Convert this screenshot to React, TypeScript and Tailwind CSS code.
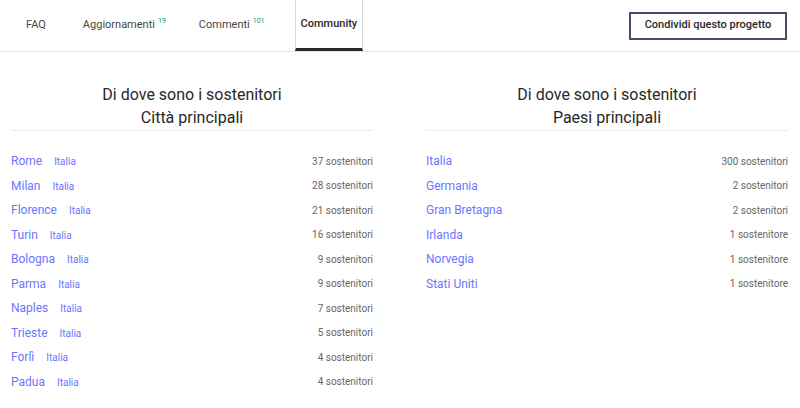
import React from "react";

const cities: [string, string][] = [
  ["Rome", "37 sostenitori"],
  ["Milan", "28 sostenitori"],
  ["Florence", "21 sostenitori"],
  ["Turin", "16 sostenitori"],
  ["Bologna", "9 sostenitori"],
  ["Parma", "9 sostenitori"],
  ["Naples", "7 sostenitori"],
  ["Trieste", "5 sostenitori"],
  ["Forlì", "4 sostenitori"],
  ["Padua", "4 sostenitori"],
];

const countries: [string, string][] = [
  ["Italia", "300 sostenitori"],
  ["Germania", "2 sostenitori"],
  ["Gran Bretagna", "2 sostenitori"],
  ["Irlanda", "1 sostenitore"],
  ["Norvegia", "1 sostenitore"],
  ["Stati Uniti", "1 sostenitore"],
];

function Heading({ sub }: { sub: string }) {
  return (
    <div className="border-b border-[#ececec] pb-[1px] text-center text-[16px] leading-[23px] text-[#282828]">
      <div>Di dove sono i sostenitori</div>
      <div>{sub}</div>
    </div>
  );
}

export default function App() {
  return (
    <div
      className="w-[800px] h-[408px] bg-white overflow-hidden"
      style={{ fontFamily: "Roboto, 'Noto Sans', sans-serif" }}
    >
      <div className="flex items-center justify-between h-[52px] border-b border-[#e6e6e6] pr-[13px]">
        <div className="flex h-full items-stretch text-[11px] text-[#464646]">
          <div className="flex items-center pl-[26px]">FAQ</div>
          <div className="flex items-center ml-[37px]">
            Aggiornamenti
            <sup className="ml-[3px] text-[7px] text-[#05a081] -mt-[2px]">19</sup>
          </div>
          <div className="flex items-center ml-[33px]">
            Commenti
            <sup className="ml-[3px] text-[7px] text-[#05a081] -mt-[2px]">101</sup>
          </div>
          <div className="ml-[30px] flex items-center px-[5px] border-x border-[#d8d8de] border-b-[3px] border-b-[#282828] font-medium text-[#282828]">
            Community
          </div>
        </div>
        <button className="h-[28px] w-[158px] border-2 border-[#4a4a66] text-[11px] font-medium text-[#282828] bg-white">
          Condividi questo progetto
        </button>
      </div>

      <div className="grid grid-cols-2 gap-[53px] pl-[11px] pr-[12px] pt-[31px]">
        <div>
          <Heading sub="Città principali" />
          <div className="pt-[18px]">
            {cities.map(([c, n]) => (
              <div key={c} className="flex items-center justify-between h-[24.5px]">
                <div className="flex items-baseline gap-[12px] text-[#6a76ff]">
                  <span className="text-[12px]">{c}</span>
                  <span className="text-[10px]">Italia</span>
                </div>
                <span className="text-[10px] text-[#666]">{n}</span>
              </div>
            ))}
          </div>
        </div>
        <div>
          <Heading sub="Paesi principali" />
          <div className="pt-[18px]">
            {countries.map(([c, n]) => (
              <div key={c} className="flex items-center justify-between h-[24.5px]">
                <span className="text-[12px] text-[#6a76ff]">{c}</span>
                <span className="text-[10px] text-[#666]">{n}</span>
              </div>
            ))}
          </div>
        </div>
      </div>
    </div>
  );
}
